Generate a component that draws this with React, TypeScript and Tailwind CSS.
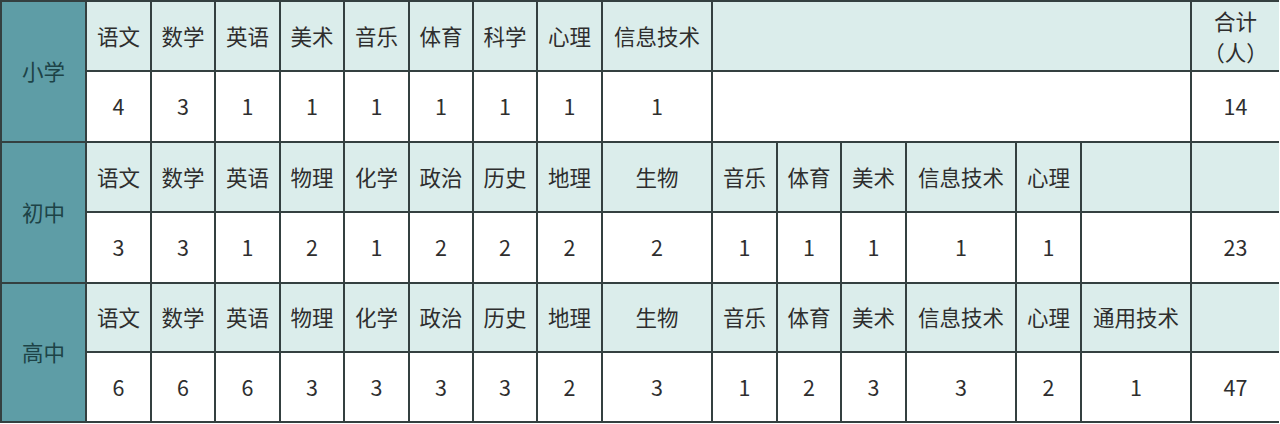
const cols = [
  "85px", "65px", "64px", "65px", "64px", "65px", "64px", "64px", "65px",
  "110px", "65px", "64px", "65px", "110px", "65px", "110px", "87px",
];

type Cell = { text?: string; span?: number };

type Stage = {
  name: string;
  subjects: Cell[];
  counts: Cell[];
  totalHead?: boolean;
  total: string;
};

const stages: Stage[] = [
  {
    name: "小学",
    subjects: [
      { text: "语文" }, { text: "数学" }, { text: "英语" }, { text: "美术" },
      { text: "音乐" }, { text: "体育" }, { text: "科学" }, { text: "心理" },
      { text: "信息技术" }, { span: 6 },
    ],
    counts: [
      { text: "4" }, { text: "3" }, { text: "1" }, { text: "1" }, { text: "1" },
      { text: "1" }, { text: "1" }, { text: "1" }, { text: "1" }, { span: 6 },
    ],
    totalHead: true,
    total: "14",
  },
  {
    name: "初中",
    subjects: [
      { text: "语文" }, { text: "数学" }, { text: "英语" }, { text: "物理" },
      { text: "化学" }, { text: "政治" }, { text: "历史" }, { text: "地理" },
      { text: "生物" }, { text: "音乐" }, { text: "体育" }, { text: "美术" },
      { text: "信息技术" }, { text: "心理" }, {},
    ],
    counts: [
      { text: "3" }, { text: "3" }, { text: "1" }, { text: "2" }, { text: "1" },
      { text: "2" }, { text: "2" }, { text: "2" }, { text: "2" }, { text: "1" },
      { text: "1" }, { text: "1" }, { text: "1" }, { text: "1" }, {},
    ],
    total: "23",
  },
  {
    name: "高中",
    subjects: [
      { text: "语文" }, { text: "数学" }, { text: "英语" }, { text: "物理" },
      { text: "化学" }, { text: "政治" }, { text: "历史" }, { text: "地理" },
      { text: "生物" }, { text: "音乐" }, { text: "体育" }, { text: "美术" },
      { text: "信息技术" }, { text: "心理" }, { text: "通用技术" },
    ],
    counts: [
      { text: "6" }, { text: "6" }, { text: "6" }, { text: "3" }, { text: "3" },
      { text: "3" }, { text: "3" }, { text: "2" }, { text: "3" }, { text: "1" },
      { text: "2" }, { text: "3" }, { text: "3" }, { text: "2" }, { text: "1" },
    ],
    total: "47",
  },
];

const spanClass: Record<number, string> = {
  1: "col-span-1",
  6: "col-span-6",
};

function Td({ cell, head }: { cell: Cell; head?: boolean }) {
  return (
    <div
      className={`${spanClass[cell.span ?? 1]} flex items-center justify-center border-r-2 border-b-2 border-[#344040] ${
        head ? "bg-[#dbedeb]" : "bg-white"
      }`}
    >
      {cell.text}
    </div>
  );
}

export default function App() {
  return (
    <div className="h-[424px] w-[1280px] bg-white">
      <div
        className="grid w-[1279px] grid-rows-[70px_71px_70px_71px_69px_70px] border-l-2 border-t-2 border-[#344040] text-[21.5px] text-[#2e2e2e] [font-family:'Noto_Sans_CJK_SC','Noto_Sans',sans-serif]"
        style={{ gridTemplateColumns: cols.join(" ") }}
      >
        {stages.map((s) => (
          <div key={s.name} className="contents">
            <div className="row-span-2 flex items-center justify-center border-r-2 border-b-2 border-[#344040] bg-[#5e9da6] text-[#1d4347]">
              {s.name}
            </div>
            {s.subjects.map((c, i) => (
              <Td key={`h${i}`} cell={c} head />
            ))}
            <div className="flex flex-col items-center justify-center border-b-2 border-[#344040] bg-[#dbedeb] leading-[31px]">
              {s.totalHead && (
                <>
                  <span>合计</span>
                  <span>（人）</span>
                </>
              )}
            </div>
            {s.counts.map((c, i) => (
              <Td key={`v${i}`} cell={c} />
            ))}
            <div className="flex items-center justify-center border-b-2 border-[#344040] bg-white">
              {s.total}
            </div>
          </div>
        ))}
      </div>
    </div>
  );
}
